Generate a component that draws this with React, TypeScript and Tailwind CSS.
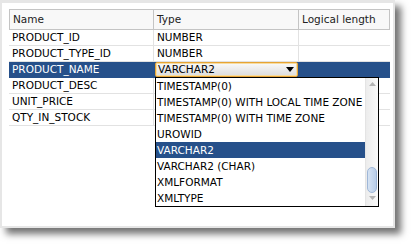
const rows = [
  { name: "PRODUCT_ID", type: "NUMBER" },
  { name: "PRODUCT_TYPE_ID", type: "NUMBER" },
  { name: "PRODUCT_NAME", type: "VARCHAR2", selected: true },
  { name: "PRODUCT_DESC", type: "" },
  { name: "UNIT_PRICE", type: "" },
  { name: "QTY_IN_STOCK", type: "" },
];

const options = [
  "TIMESTAMP(0)",
  "TIMESTAMP(0) WITH LOCAL TIME ZONE",
  "TIMESTAMP(0) WITH TIME ZONE",
  "UROWID",
  "VARCHAR2",
  "VARCHAR2 (CHAR)",
  "XMLFORMAT",
  "XMLTYPE",
];

export default function App() {
  return (
    <div className="relative w-[414px] h-[244px] bg-white font-['DejaVu_Sans',sans-serif] text-[10.5px] text-black">
      <div className="w-[395px] h-[228px] border-2 border-t-[3px] border-[#e6e6e6] bg-white pl-[7px] pt-[6px] shadow-[6px_6px_7px_rgba(0,0,0,0.55)]">
        <div className="w-[381px]">
          {/* header */}
          <div className="flex h-[21px] border border-[#c4c4c4] bg-[#f8f8f8] text-[#222]">
            <div className="w-[144px] border-r border-[#c4c4c4] pl-[3px] leading-[19px]">Name</div>
            <div className="w-[145px] border-r border-[#c4c4c4] pl-[3px] leading-[19px]">Type</div>
            <div className="flex-1 pl-[3px] leading-[19px]">Logical length</div>
          </div>

          {/* rows */}
          {rows.map((row) =>
            row.selected ? (
              <div key={row.name} className="flex h-[16px] bg-[#26508a] text-white">
                <div className="w-[145px] pl-[3px] leading-[15px]">{row.name}</div>
                <div className="w-[145px] pl-[1px]">
                  <div className="flex items-center w-[143px] h-[15px] rounded-[2px] border border-[#e7a434] bg-gradient-to-b from-[#fafafa] to-[#dcdcdc] shadow-[inset_0_0_0_1px_#f7dca0] text-black">
                    <span className="pl-[2px] leading-[13px]">{row.type}</span>
                    <svg width="8" height="5" viewBox="0 0 8 5" className="ml-auto mr-[3px]">
                      <path d="M0 0 H8 L4 5 Z" fill="#000" />
                    </svg>
                  </div>
                </div>
                <div className="flex-1" />
              </div>
            ) : (
              <div key={row.name} className="flex h-[16px] border-b border-[#e2e2e2]">
                <div className="w-[145px] border-r border-[#e2e2e2] pl-[3px] leading-[15px]">{row.name}</div>
                <div className="w-[145px] border-r border-[#e2e2e2] pl-[3px] leading-[15px]">{row.type}</div>
                <div className="flex-1" />
              </div>
            )
          )}
        </div>
      </div>

      {/* open dropdown */}
      <div className="absolute left-[155px] top-[77px] w-[224px] h-[130px] border border-black bg-white flex">
        <div className="flex-1">
          {options.map((opt) => (
            <div
              key={opt}
              className={
                opt === "VARCHAR2"
                  ? "h-[16px] pl-[1px] leading-[16px] whitespace-nowrap bg-[#26508a] text-white"
                  : "h-[16px] pl-[1px] leading-[16px] whitespace-nowrap"
              }
            >
              {opt}
            </div>
          ))}
        </div>
        <div className="w-[13px] bg-gradient-to-r from-[#ececec] to-[#fafafa] border-l border-[#e4e4e4] flex flex-col items-center">
          <svg width="7" height="4" viewBox="0 0 7 4" className="mt-[4px]">
            <path d="M0 4 H7 L3.5 0 Z" fill="#b4b4b4" />
          </svg>
          <div className="mt-[81px] w-[10px] h-[26px] rounded-full border border-[#9fb7d8] bg-gradient-to-r from-[#d6e3f3] to-[#b9cde8]" />
          <svg width="7" height="4" viewBox="0 0 7 4" className="mt-[3px]">
            <path d="M0 0 H7 L3.5 4 Z" fill="#b4b4b4" />
          </svg>
        </div>
      </div>
    </div>
  );
}
